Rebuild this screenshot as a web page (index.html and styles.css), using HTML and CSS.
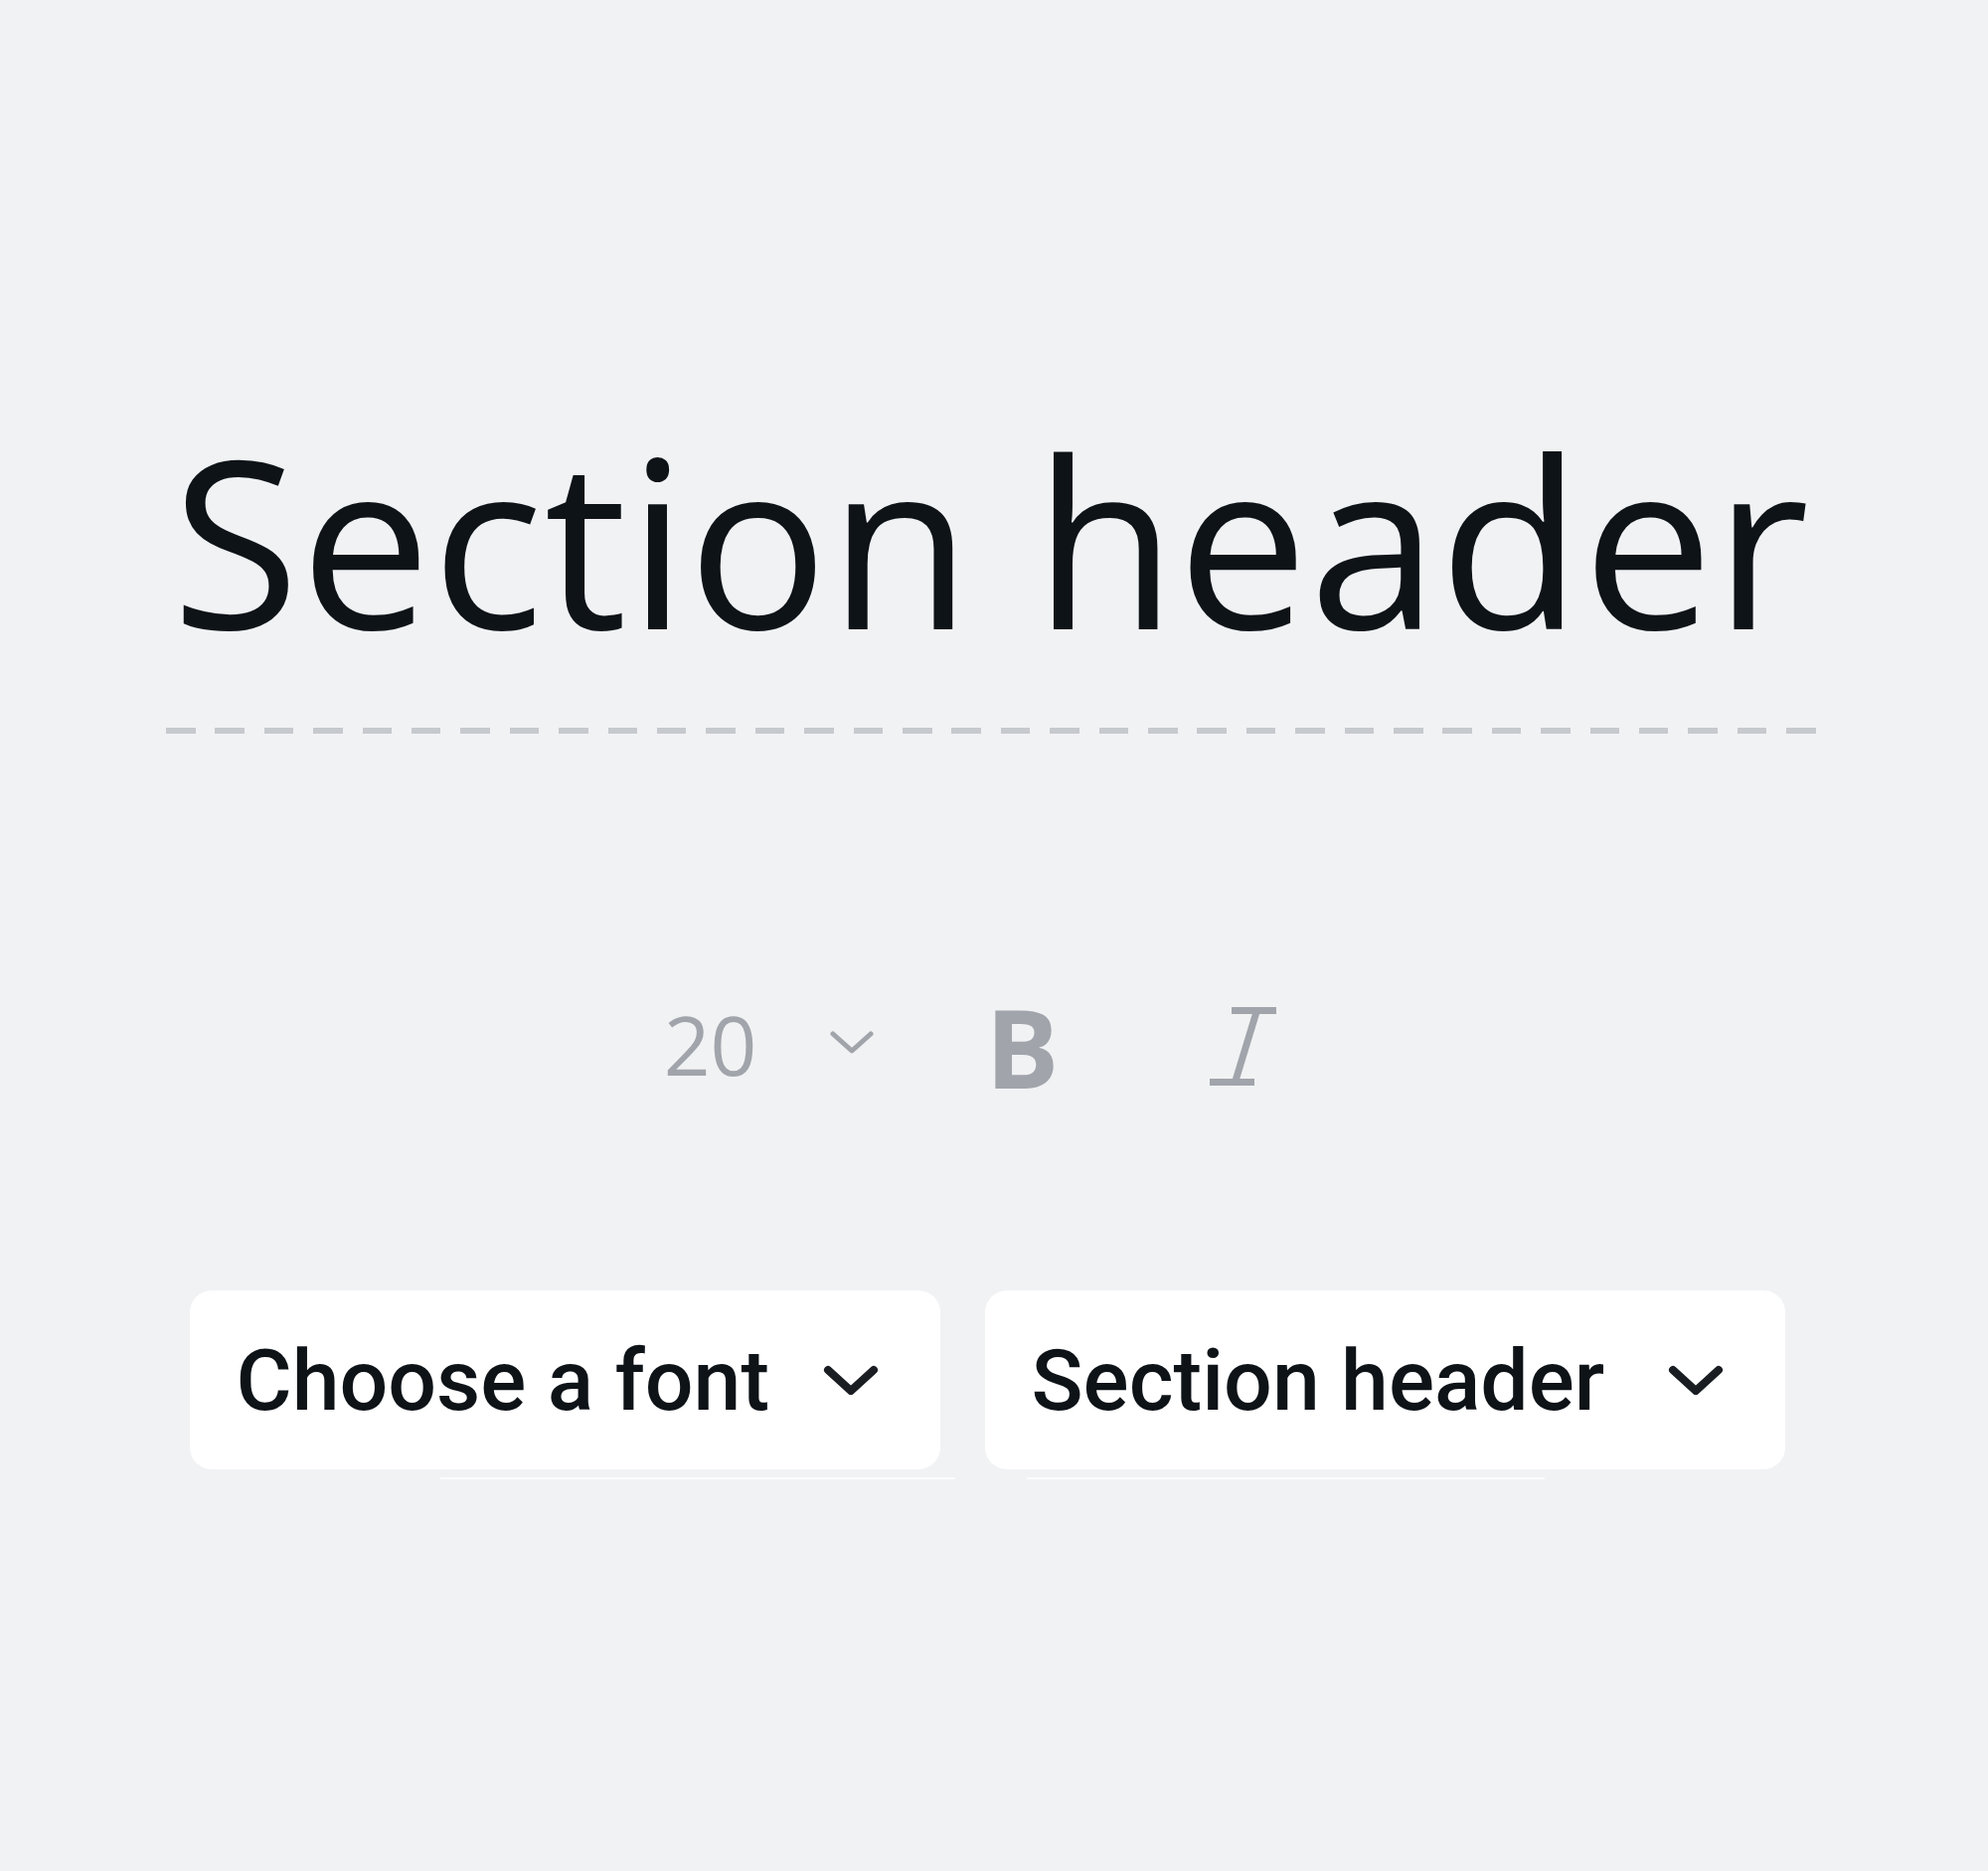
FILE: index.html
```html
<!DOCTYPE html>
<html lang="en">
<head>
  <meta charset="UTF-8">
  <meta name="viewport" content="width=device-width, initial-scale=1.0">
  <title>Section header</title>
  <link rel="stylesheet" href="styles.css">
</head>
<body>
  <div class="editor">
    <div class="title-block">
      <h1 class="title">Section header</h1>
      <div class="dashed"></div>
    </div>

    <div class="toolbar">
      <div class="size-pick">
        <span class="size-val">20</span>
        <svg class="size-chev" viewBox="0 0 44 23" width="44" height="23">
          <polyline points="3,3 22,20 41,3" fill="none" stroke="#a1a5ab" stroke-width="5" stroke-linecap="round" stroke-linejoin="round"/>
        </svg>
      </div>
      <span class="bold-btn">B</span>
      <svg class="italic-btn" viewBox="0 0 67 81" width="67" height="81">
        <g stroke="#a1a5ab" stroke-width="7" stroke-linecap="butt" fill="none">
          <line x1="22" y1="4.5" x2="67" y2="4.5"/>
          <line x1="0" y1="76.5" x2="45" y2="76.5"/>
          <line x1="47" y1="6" x2="26" y2="75"/>
        </g>
      </svg>
    </div>

    <div class="selects">
      <div class="select-wrap wrap-font">
        <button class="select">
          <span>Choose a font</span>
          <svg viewBox="0 0 56 30" width="56" height="30"><polyline points="5,5 28,26 51,5" fill="none" stroke="#1a1e23" stroke-width="8" stroke-linecap="round" stroke-linejoin="round"/></svg>
        </button>
        <div class="select-line line-font"></div>
      </div>
      <div class="select-wrap wrap-style">
        <button class="select">
          <span>Section header</span>
          <svg viewBox="0 0 56 30" width="56" height="30"><polyline points="5,5 28,26 51,5" fill="none" stroke="#1a1e23" stroke-width="8" stroke-linecap="round" stroke-linejoin="round"/></svg>
        </button>
        <div class="select-line line-style"></div>
      </div>
    </div>
  </div>
</body>
</html>
```

FILE: styles.css
```css
body {
  margin: 0;
  padding: 0;
  background: #f1f2f4;
  font-family: 'Open Sans', 'Noto Sans', Arial, sans-serif;
  color: #0e1318;
}
.editor {
  display: flex;
  flex-direction: column;
  align-items: center;
  padding-top: 426px;
  min-height: 100vh;
  box-sizing: border-box;
}
.title-block {
  width: 1661px;
  margin-left: -6px;
}
.title {
  margin: 0;
  font-size: 234px;
  font-weight: 400;
  line-height: 1;
  text-align: center;
  white-space: nowrap;
  letter-spacing: 1px;
}
.dashed {
  margin-top: 72px;
  height: 6px;
  background: repeating-linear-gradient(to right, #c6c9cd 0 29.5px, transparent 29.5px 49.4px);
}
.toolbar {
  display: flex;
  align-items: center;
  margin-top: 273px;
  margin-right: 48px;
  height: 82px;
}
.size-pick {
  display: flex;
  align-items: center;
  gap: 74px;
  margin-top: -4px;
}
.size-val {
  font-size: 82px;
  line-height: 1;
  color: #a1a5ab;
}
.size-chev {
  display: block;
  margin-top: -4px;
}
.bold-btn {
  margin-left: 112px;
  font-size: 110px;
  font-weight: 700;
  line-height: 1;
  color: #a1a5ab;
}
.italic-btn {
  display: block;
  margin-left: 152px;
}
.selects {
  display: flex;
  gap: 45px;
  margin-top: 205px;
  margin-right: 14px;
}
.select-wrap {
  display: flex;
  flex-direction: column;
}
.wrap-font {
  width: 755px;
}
.wrap-style {
  width: 805px;
}
.select {
  display: flex;
  align-items: center;
  justify-content: space-between;
  box-sizing: border-box;
  width: 100%;
  height: 180px;
  padding: 0 62px 0 47px;
  border: none;
  border-radius: 22px;
  background: #fff;
  font-family: 'Roboto', 'Open Sans', Arial, sans-serif;
  font-size: 86px;
  font-weight: 500;
  color: #0e1318;
  cursor: pointer;
}
.select svg {
  display: block;
  flex-shrink: 0;
}
.select-line {
  flex-shrink: 0;
  margin-top: 8px;
  height: 2px;
  background: #fbfcfc;
}
.line-font {
  margin-left: 252px;
  width: 518px;
}
.line-style {
  margin-left: 42px;
  width: 521px;
}
```
